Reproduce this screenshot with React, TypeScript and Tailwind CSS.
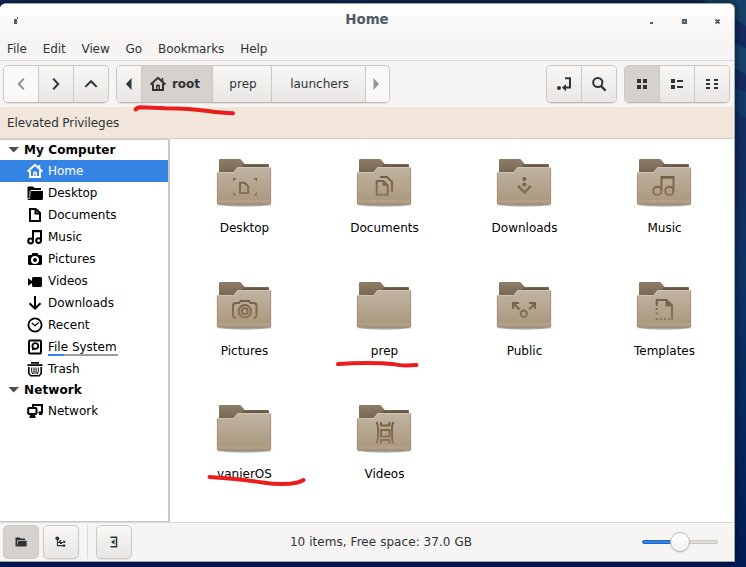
import React from "react";

const INK = "#2e3436";

type IconProps = { name: string; color?: string };

function SmallIcon({ name, color = "#000" }: IconProps) {
  const s = { fill: "none", stroke: color, strokeWidth: 2 };
  const shapes: Record<string, React.ReactNode> = {
    home: (
      <>
        <path d="M0.6 8.6 8 1.8l7.4 6.8" {...s} />
        <path d="M3 7.5V14h10V7.5" {...s} />
        <path d="M6 14V9.5l1-1h2l1 1V14H8.6v-3.5H7.4V14z" fill={color} />
        <path d="M11.5 2h1.7v4l-1.7-1.5z" fill={color} />
      </>
    ),
    folder: (
      <>
        <path d="M1 1.5h5l1.5 1.5H14V5H4L2.5 6.5V13L.5 13.5V2z" fill={color} />
        <path d="M3.5 6H16v8l-1 1H1l-.5-1 2.5-.5z" fill={color} />
      </>
    ),
    document: <path d="M3 2h6l4 4v8H3z M8.5 1v5.5H14" {...s} />,
    music: (
      <>
        <path d="M6 11.5V2.3h8V11" {...s} />
        <path d="M5 2h10" {...s} />
        <circle cx="3.6" cy="12" r="2.4" {...s} />
        <circle cx="11.6" cy="11.6" r="2.4" {...s} />
      </>
    ),
    camera: (
      <path
        fillRule="evenodd"
        fill={color}
        d="M5.5 2h5l1 2H14l1 1v8l-1 1H2l-1-1V5l1-1h2.5zM8 5a4 4 0 1 0 0 8 4 4 0 0 0 0-8zm0 2.1a1.9 1.9 0 1 1 0 3.8 1.9 1.9 0 0 1 0-3.8z"
      />
    ),
    video: <path d="M6 4h8l1 1v8l-1 1H6l-1-1v-3l-4 2.8V5.2L5 8V5z" fill={color} />,
    download: <path d="M8 1v12M2.5 8.3 8 13.6l5.5-5.3" {...s} />,
    recent: (
      <>
        <circle cx="8" cy="8" r="6.6" {...s} strokeWidth={1.8} />
        <path d="M4.8 6 8 8.7l3.8-3.2" {...s} strokeWidth={1.2} />
      </>
    ),
    disk: (
      <>
        <rect x="2" y="1.5" width="12" height="13" rx="1" {...s} />
        <circle cx="8.3" cy="7" r="2.9" {...s} strokeWidth={1.8} />
        <path d="M5 11.5V7l4 3z" fill={color} />
      </>
    ),
    trash: (
      <>
        <path d="M.5 4.2h15M4 1.8h8" {...s} strokeWidth={1.8} />
        <path d="M1.8 6v6.5l2 2.2h8.4l2-2.2V6" {...s} strokeWidth={1.6} />
        <path d="M4.8 6.5q-.8 3.500.8 6.500M7 6.5v6.500M9 6.5v6.500M11.2 6.5q.8 3.500-.8 6.500" {...s} strokeWidth={1} />
      </>
    ),
    network: (
      <>
        <path d="M6 4V2h9v7.5h-3.5" {...s} />
        <rect x="1.2" y="5" width="8.3" height="6" rx="1" {...s} />
        <path d="M3.5 11h4l1 3v1h-6v-1zM12.5 9.5h2l.8 2.5H12z" fill={color} />
      </>
    ),
    back: <path d="M10.8 2.6 5.8 8l5 5.400" {...s} />,
    next: <path d="M5.2 2.6 10.2 8l-5 5.400" {...s} />,
    up: <path d="M2.3 10.900 8 5.200l5.700 5.700" {...s} />,
    left: <path d="M10.5 2v12L5 8z" fill={color} />,
    right: <path d="M5.5 2v12L11 8z" fill={color} />,
    location: (
      <>
        <path d="M9 2.3h5v9.2H8" {...s} />
        <path d="M10 8.2v7L5.8 11.6z" fill={color} />
        <circle cx="3" cy="12" r="2" fill={color} />
      </>
    ),
    search: (
      <>
        <circle cx="6.8" cy="6.5" r="4.6" {...s} strokeWidth={2} />
        <path d="m10 10 4.6 4.6" {...s} strokeWidth={2.3} />
      </>
    ),
    grid: <path d="M3 3h4v4H3zM9 3h4v4H9zM3 9h4v4H3zM9 9h4v4H9z" fill={color} />,
    list: <path d="M2 3h4v4H2zM8 4h6v2H8zM2 9h4v4H2zM8 10h6v2H8z" fill={color} />,
    compact: (
      <path d="M2 3h4v2H2zM10 3h4v2h-4zM2 7h4v2H2zM10 7h4v2h-4zM2 11h4v2H2zM10 11h4v2h-4z" fill={color} />
    ),
    places: (
      <>
        <path d="M2.500 3.600h4l1 1H12V6H5L4 7v5l-1.500.300z" fill={color} />
        <path d="M5 6.800h8.700V12l-.600.600H2.500l1.600-.800z" fill={color} />
      </>
    ),
    tree: (
      <>
        <circle cx="4.3" cy="4.3" r="1.9" fill={color} />
        <path d="M4.5 5v6.7H11M4.5 8.5H10" {...s} strokeWidth={1.2} />
        <path d="M6 6.300h2.300v1.500H6zM10.200 6.800h2v2.200h-2zM10 10.500h2.200v2.200H10zM7 8h2v2H7z" fill={color} />
      </>
    ),
    hide: (
      <>
        <path d="M4.500 3.300h6v9.400h-6" {...s} strokeWidth={1.5} />
        <path d="M8.500 5.500v5L5 8z" fill={color} />
      </>
    ),
  };
  return (
    <svg width="16" height="16" viewBox="0 0 16 16" className="shrink-0">
      {shapes[name]}
    </svg>
  );
}

const solid = { fill: "url(#emblem)", stroke: "none" };

const emblems: Record<string, React.ReactNode> = {
  Desktop: (
    <>
      <path d="M24 25.7h4.500l3.700 3.700V36H24z" />
      <path d="M17 21h3.500L17 24.500zM41 21h-3.500l3.500 3.500zM17 38.500h3.500L17 35zM41 38.500h-3.500L41 35z" {...solid} />
    </>
  ),
  Documents: (
    <>
      <path d="M20.700 24h6.500l4.500 4.500v9.200h-11z" />
      <path d="M26.500 23.500v5.500h5.500z" {...solid} />
      <path d="M24 20h7l5 5v9.700" />
    </>
  ),
  Downloads: (
    <>
      <path d="m22 29 6.400 6.400L34.800 29" strokeWidth="2.600" />
      <circle cx="28.400" cy="22" r="2.100" {...solid} />
      <circle cx="28.400" cy="27.600" r="2.100" {...solid} />
    </>
  ),
  Music: (
    <>
      <path d="M25.500 33.500V20h12v13.500" />
      <path d="M25 20.500h12" strokeWidth="2.500" />
      <circle cx="21.300" cy="33.900" r="4.100" />
      <circle cx="33.300" cy="33.900" r="4.100" />
    </>
  ),
  Pictures: (
    <>
      <path d="M20 38c-2.500 0-3-1-3-3v-9c0-2 1-3 3-3h3l1.500-2h8.500l1.500 2h3c2 0 3 1 3 3v9c0 2-.500 3-3 3" />
      <circle cx="28.800" cy="31.300" r="6.200" />
      <circle cx="28.800" cy="31.300" r="3" />
    </>
  ),
  Public: (
    <>
      <circle cx="27.800" cy="33.800" r="3.200" />
      <path d="m23.500 29.500-6-6M33 29.500l6-6" strokeWidth="2.200" />
      <path d="M17 29v-6h6M39 29v-6h-6" />
    </>
  ),
  Templates: (
    <>
      <path d="M20.700 26v-6h9.800l5.500 5.500V40" />
      <path d="M29.500 19.500v7h7z" {...solid} />
      <path d="M19.700 28h2v2h-2zM19.700 32.500h2v2h-2zM19.700 38h2v2h-2zM23.800 38h2v2h-2zM27.900 38h2v2h-2zM32 38h2v2h-2z" {...solid} />
    </>
  ),
  Videos: (
    <>
      <path d="M20.500 19c1.300 2 1.500 4 1.500 6v10c0 2-.300 3.500-1.800 5.500M37.500 19c-1.300 2-1.500 4-1.500 6v10c0 2 .300 3.500 1.800 5.500" />
      <path d="M25 19v3.500h8.500V19M25 27h8.500v6.500H25zM25 41v-4h8.500v4" />
    </>
  ),
};

function Folder({ name }: { name: string }) {
  return (
    <svg width="60" height="52" viewBox="0 0 60 52" className="block">
      <ellipse cx="28.500" cy="48" rx="30" ry="2" fill="url(#shade)" />
      <path d="M3 3q0-1 1.300-1h20l4.500 5H52q1 0 1 1V22H3z" fill="url(#back)" />
      <path d="M28 7.500h24.500V10H26z" fill="#5f513f" opacity=".75" />
      <path d="M1 16q0-1 1-1h15.500l4-5H54q1 0 1 1v35.500q0 1-1.500 1h-51Q1 47.500 1 46.500z" fill="url(#front)" />
      <path d="M1.800 15.700h16l4-5h32.500" fill="none" stroke="#d6c9b7" strokeWidth=".8" />
      <path d="M1.300 16v30.500M54.700 11v35.500" fill="none" stroke="#95836b" strokeWidth=".6" />
      <path d="M2 43h52v3.500H2z" fill="#c5b294" opacity=".3" />
      <path d="M2 47.100h52" stroke="#93816a" strokeWidth=".8" />
      <g fill="none" stroke="url(#emblem)" strokeWidth="2">{emblems[name]}</g>
    </svg>
  );
}

const places = [
  ["Home", "home"], ["Desktop", "folder"], ["Documents", "document"], ["Music", "music"],
  ["Pictures", "camera"], ["Videos", "video"], ["Downloads", "download"], ["Recent", "recent"],
  ["File System", "disk"], ["Trash", "trash"],
];

const folders = ["Desktop", "Documents", "Downloads", "Music", "Pictures", "prep", "Public", "Templates", "vanierOS", "Videos"];

const raised = "bg-linear-to-b from-[#f8f7f6] to-[#e9e7e5]";
const group = "flex h-[38px] overflow-hidden rounded-[5px] border border-[#cdc7c2] border-b-[#bfb8b1] shadow-[0_1px_1px_rgba(0,0,0,0.08)]";
const cell = "flex items-center justify-center border-[#cdc7c2]";

function Header({ text, className }: { text: string; className: string }) {
  return (
    <div className={`flex items-center pl-2 font-bold tracking-[0.1px] text-black ${className}`}>
      <svg width="12" height="8" viewBox="0 0 12 8" className="mr-1"><path d="M.5 1h10.500L5.700 6.500z" fill="#4d4d4d" /></svg>
      {text}
    </div>
  );
}

export default function App() {
  return (
    <div className="relative h-[567px] w-[746px] overflow-hidden bg-linear-to-b from-[#14285f] via-[#0b3267] to-[#011c56] pt-[3px] font-['DejaVu_Sans',sans-serif] text-[12px] leading-[14px] text-[#2e3436]">
      <svg width="0" height="0" className="absolute">
        <defs>
          <linearGradient id="front" x1="0" y1="0" x2="0" y2="1"><stop stopColor="#c1b4a3" /><stop offset="1" stopColor="#a8967c" /></linearGradient>
          <linearGradient id="back" x1="0" y1="0" x2="0" y2="1"><stop stopColor="#8e7e68" /><stop offset="1" stopColor="#6b5c48" /></linearGradient>
          <linearGradient id="emblem" gradientUnits="userSpaceOnUse" x1="0" y1="19" x2="0" y2="43"><stop stopColor="#735f44" /><stop offset="1" stopColor="#92795a" /></linearGradient>
          <radialGradient id="shade"><stop offset=".6" stopColor="#000" stopOpacity=".35" /><stop offset="1" stopColor="#000" stopOpacity="0" /></radialGradient>
        </defs>
      </svg>
      <svg width="120" height="140" viewBox="0 0 120 140" className="absolute top-0 right-0">
        <path d="M76 0h44v27q-20-16-44-27zM108 43l12 5v27q-6-5-12-7z" fill="#15496d" opacity=".8" />
        <path d="M108 88l12 4v26l-12-8z" fill="#11406f" opacity=".7" />
      </svg>

      <div className="relative flex h-[559px] w-[735px] flex-col overflow-hidden rounded-t-[6px] border-t border-r border-b border-[#a3aaa9] bg-[#f6f5f4] shadow-[0_0_7px_1px_rgba(0,0,0,0.55)]">
        <div className="flex h-[33px] shrink-0 items-center bg-linear-to-b from-white to-[#f6f5f4]">
          <svg width="20" height="8" viewBox="0 0 20 8" className="shrink-0"><path d="M14 2h3v5h-3zM17 0h1v2h-1z" fill="#4f626c" /></svg>
          <div className="flex-1 pb-[2px] pl-[66px] text-center text-[13.4px] font-bold text-[#4b5b66]">Home</div>
          <svg width="86" height="8" viewBox="0 0 86 8" className="shrink-0">
            <path d="M2 5h3v2H2z" fill="#4f626c" />
            <path d="M35 3h3v3h-3z" fill="none" stroke="#4f626c" strokeWidth="2" />
            <path d="m67.5 2.5 4 4m0-4-4 4" stroke="#4f626c" strokeWidth="1.8" />
          </svg>
        </div>

        <div className="flex h-[24px] shrink-0 items-center gap-4 border-b border-[#dadada] pl-[7px] tracking-[-0.1px]">
          {["File", "Edit", "View", "Go", "Bookmarks", "Help"].map((m) => <span key={m}>{m}</span>)}
        </div>

        <div className="flex h-[46px] shrink-0 items-start pt-1 pr-1 pl-[3px]">
          <div className={`${group} mr-[7px] w-[106px]`}>
            <div className={`${cell} w-[35px] border-r bg-[#faf9f8]`}><SmallIcon name="back" color="#8f9293" /></div>
            <div className={`${cell} ${raised} w-[35px] border-r`}><SmallIcon name="next" color={INK} /></div>
            <div className={`${cell} ${raised} flex-1`}><SmallIcon name="up" color={INK} /></div>
          </div>
          <div className={`${group} w-[274px]`}>
            <div className={`${cell} ${raised} w-[25px] border-r`}><SmallIcon name="left" color={INK} /></div>
            <div className={`${cell} w-[71px] gap-[6px] border-r bg-[#d6d1cd] pr-1 font-bold`}><SmallIcon name="home" color={INK} />root</div>
            <div className={`${cell} ${raised} w-[59px] border-r pl-[2px]`}>prep</div>
            <div className={`${cell} ${raised} w-[94px] border-r pl-[2px]`}>launchers</div>
            <div className={`${cell} flex-1 bg-[#faf9f8] pr-1`}><SmallIcon name="right" color="#929595" /></div>
          </div>
          <div className="flex-1" />
          <div className={`${group} mr-[7px] w-[71px]`}>
            <div className={`${cell} ${raised} w-[35px] border-r`}><SmallIcon name="location" color={INK} /></div>
            <div className={`${cell} ${raised} flex-1`}><SmallIcon name="search" color={INK} /></div>
          </div>
          <div className={`${group} w-[106px]`}>
            <div className={`${cell} w-[35px] border-r bg-[#d6d1cd]`}><SmallIcon name="grid" color={INK} /></div>
            <div className={`${cell} ${raised} w-[35px] border-r`}><SmallIcon name="list" color={INK} /></div>
            <div className={`${cell} ${raised} flex-1`}><SmallIcon name="compact" color={INK} /></div>
          </div>
        </div>

        <div className="flex h-8 shrink-0 items-center border-b border-[#d5d0cc] bg-[#f2e6db] pl-[7px] tracking-[-0.1px]">Elevated Privileges</div>

        <div className="flex min-h-0 flex-1 bg-white">
          <div className="w-[170px] shrink-0 border-t border-r-2 border-b border-[#cdc7c2] text-black">
            <Header text="My Computer" className="h-5" />
            {places.map(([label, icon]) => (
              <div key={label} className={`flex h-[22px] items-center gap-[5px] pl-[27px] ${label === "Home" ? "bg-[#3584e4] text-white" : ""}`}>
                <SmallIcon name={icon} color={label === "Home" ? "#fff" : "#000"} />
                {label === "File System" ? (
                  <span className="flex w-[70px] flex-col">
                    <span className="h-[15px] pt-px whitespace-nowrap">{label}</span>
                    <span className="-mb-px flex h-[2px] bg-[#a69c97]"><span className="w-4 bg-[#3584e4]" /></span>
                  </span>
                ) : label}
              </div>
            ))}
            <Header text="Network" className="h-5" />
            <div className="flex h-[22px] items-center gap-[5px] pl-[27px]"><SmallIcon name="network" />Network</div>
          </div>
          <div className="grid flex-1 auto-rows-[123px] grid-cols-[repeat(4,140px)] content-start pt-[18px] pl-[5px] text-black">
            {folders.map((name) => (
              <div key={name} className="flex flex-col items-center">
                <div className="pl-[2px]"><Folder name={name} /></div>
                <div className="mt-3 pr-px">{name}</div>
              </div>
            ))}
          </div>
        </div>

        <div className="flex h-[39px] shrink-0 items-center border-t border-[#dadada] pl-[3px]">
          <div className="flex h-[34px] w-9 items-center justify-center rounded-[5px] border border-[#cdc7c2] bg-[#d6d1cd]"><SmallIcon name="places" color={INK} /></div>
          <div className={`ml-1 flex h-[34px] w-9 items-center justify-center rounded-[5px] border border-[#cdc7c2] shadow-[0_1px_1px_rgba(0,0,0,0.08)] ${raised}`}><SmallIcon name="tree" color={INK} /></div>
          <div className="mr-2 ml-2 h-[34px] w-px bg-[#dedbd8]" />
          <div className={`flex h-[34px] w-9 items-center justify-center rounded-[5px] border border-[#cdc7c2] shadow-[0_1px_1px_rgba(0,0,0,0.08)] ${raised}`}><SmallIcon name="hide" color={INK} /></div>
          <div className="flex-1 pr-3 text-center tracking-[0.06px]">10 items, Free space: 37.0 GB</div>
          <div className="relative mr-4 flex h-5 w-[76px] items-center">
            <div className="h-1 w-[38px] rounded-l-sm border border-[#1b6acb] bg-[#3584e4]" />
            <div className="h-1 w-[38px] rounded-r-sm border border-[#cdc7c2] bg-[#deddda]" />
            <div className="absolute left-7 h-5 w-5 rounded-full border border-[#bfb8b1] bg-linear-to-b from-white to-[#f4f3f2] shadow-[0_1px_1px_rgba(0,0,0,0.12)]" />
          </div>
        </div>
      </div>

      <svg width="746" height="567" viewBox="0 0 746 567" className="pointer-events-none absolute top-0 left-0" fill="none" stroke="#ea1d1d" strokeWidth="4" strokeLinecap="round" strokeLinejoin="round">
        <path d="M135.500 109.500Q137 107.500 141 107.300L165 108.200Q190 108.500 208 111Q222 113 233 113.200" />
        <path d="M338 364q22-1.500 44-.7c10 .2 18 2.200 24 2.200l10.500-.5" />
        <path d="M209.500 477q32 2 53 5.500c15 2.200 27 1.800 35 0q4.500-1.500 6-2.500" />
      </svg>
    </div>
  );
}
